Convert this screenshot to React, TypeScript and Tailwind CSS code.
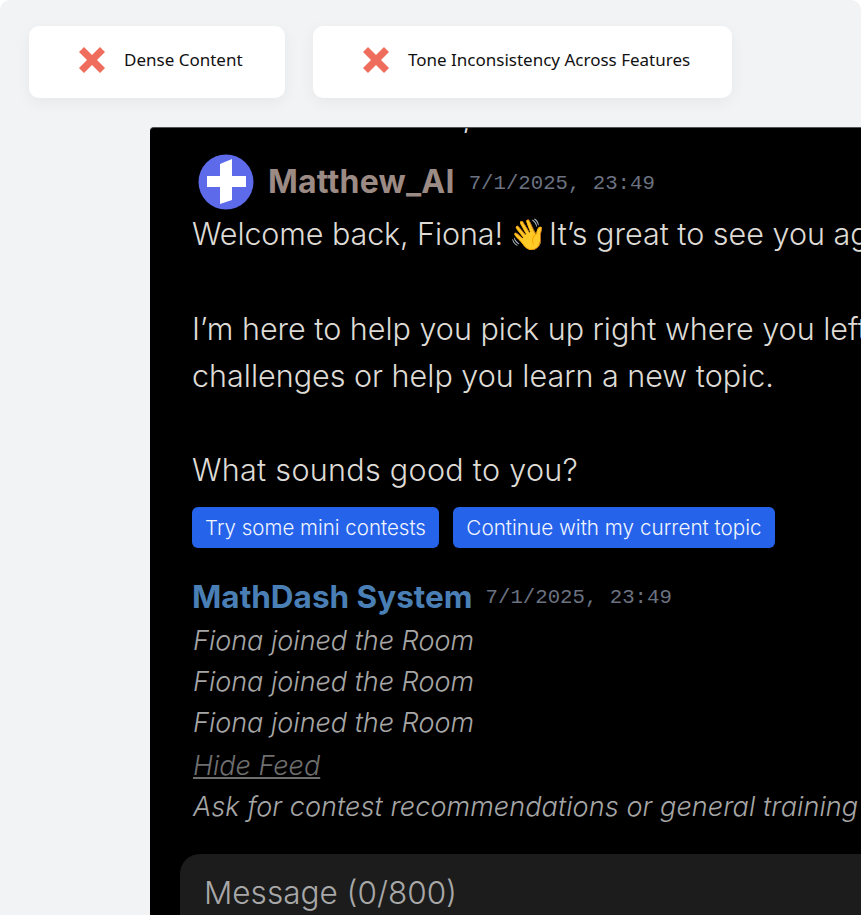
function CrossIcon() {
  return (
    <svg width="26" height="26" viewBox="0 0 26 26" className="shrink-0">
      <path d="M5 0 L13 8 L21 0 L26 5 L18 13 L26 21 L21 26 L13 18 L5 26 L0 21 L8 13 L0 5 Z" fill="#ee6d5d" />
    </svg>
  )
}

function Avatar() {
  return (
    <svg width="56" height="56" viewBox="0 0 56 56" className="shrink-0">
      <circle cx="28" cy="28" r="27.5" fill="#5d6ae9" />
      <path d="M22 10 L34 5 L34 22 L48 22 L48 33 L34 33 L34 46 L22 50 L22 33 L9 33 L9 22 L22 22 Z" fill="#ffffff" />
    </svg>
  )
}

function Badge({ label, className }: { label: string; className: string }) {
  return (
    <div className={`flex h-[72px] items-center rounded-[10px] bg-white pb-[4px] shadow-[0_4px_16px_rgba(0,0,0,0.05)] ${className}`}>
      <CrossIcon />
      <span className="font-['Noto_Sans',sans-serif] text-[17px] text-[#111]">{label}</span>
    </div>
  )
}

const feed = ['Fiona joined the Room', 'Fiona joined the Room', 'Fiona joined the Room']

export default function App() {
  return (
    <div className="h-[915px] w-[861px] overflow-hidden bg-white font-['Inter',sans-serif]">
      <div className="h-full rounded-t-[10px] bg-[#f2f3f5] pt-[26px]">
        <div className="ml-[29px] flex gap-[28px]">
          <Badge label="Dense Content" className="w-[256px] gap-[19px] pl-[50px]" />
          <Badge label="Tone Inconsistency Across Features" className="w-[419px] gap-[19px] pl-[50px]" />
        </div>

        <div className="ml-[150px] mt-[29px] h-[788px] overflow-hidden rounded-tl-[4px] border-t border-[#555] bg-black pl-[42px] whitespace-nowrap">
          <div className="ml-[270px] h-[5px] overflow-hidden">
            <div className="-mt-[24px] h-[32px] text-[30px] font-light leading-[32px] text-[#ddd]">,</div>
          </div>

          <div className="ml-[6px] mt-[21px] flex h-[56px] items-center gap-[14px]">
            <Avatar />
            <span className="text-[32px] font-bold tracking-[0.2px] text-[#9c8a84]">Matthew_AI</span>
            <span className="pt-[3px] font-['Liberation_Mono',monospace] text-[20.7px] text-[#6b7280]">7/1/2025, 23:49</span>
          </div>

          <div className="text-[30.5px] font-light leading-[47.3px] text-[#dedbd6]">
            <p>
              <span className="tracking-[-0.1px]">Welcome back, Fiona!</span>
              <span className="ml-[-3px] mr-[-6px]"> 👋 </span>
              It’s great to see you again
            </p>
            <p className="mt-[47.3px]">I’m here to help you pick up right where you left off</p>
            <p>challenges or help you learn a new topic.</p>
            <p className="mt-[47.3px] tracking-[0.3px]">What sounds good to you?</p>
          </div>

          <div className="mt-[13px] flex gap-[14px]">
            <button className="flex h-[41px] w-[247px] items-center justify-center rounded-[6px] bg-[#2563eb] pt-[2px] text-[20.5px] font-light text-[#f1f5fe]">
              Try some mini contests
            </button>
            <button className="flex h-[41px] w-[322px] items-center justify-center rounded-[6px] bg-[#2563eb] pt-[1px] text-[20.7px] font-light text-[#f1f5fe]">
              Continue with my current topic
            </button>
          </div>

          <div className="mt-[27px] flex items-center gap-[13px]">
            <span className="text-[31.5px] font-bold leading-[44px] text-[#4a7fb5]">MathDash System</span>
            <span className="pt-[2px] font-['Liberation_Mono',monospace] text-[20.7px] text-[#6b7280]">7/1/2025, 23:49</span>
          </div>

          <div className="mt-[1px] pl-[1px] text-[27px] font-light italic leading-[41.3px] text-[#a6a6a6]">
            {feed.map((line, i) => (
              <p key={i}>{line}</p>
            ))}
            <p className="mt-[1px] text-[#6f6f6f] underline">Hide Feed</p>
            <p className="tracking-[0.1px]">Ask for contest recommendations or general training advice</p>
          </div>

          <div className="-ml-[12px] mt-[27px] h-[120px] rounded-tl-[20px] bg-[#1c1c1c] pl-[24px] pt-[17px] text-[31.5px] font-light leading-[44px] text-[#a8a8a8]">
            Message (0/800)
          </div>
        </div>
      </div>
    </div>
  )
}
